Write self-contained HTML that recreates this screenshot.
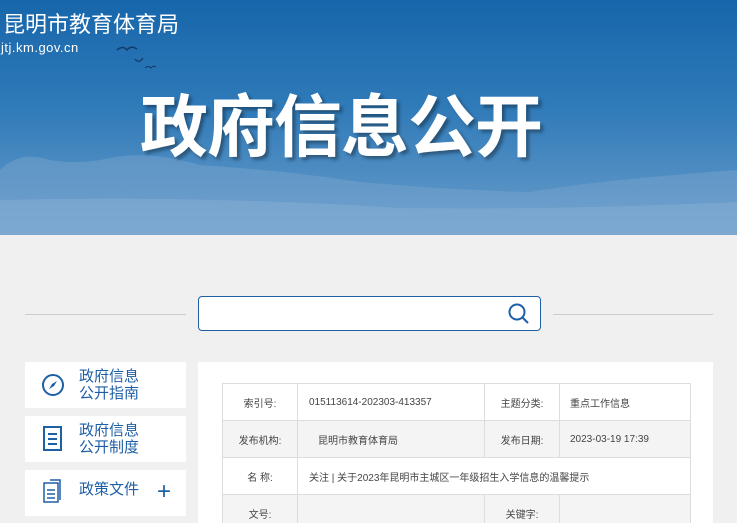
<!DOCTYPE html>
<html style="width:737px;height:523px;overflow:hidden"><head><meta charset="utf-8"><style>
*{margin:0;padding:0;box-sizing:border-box}
body{width:737px;height:523px;overflow:hidden;background:#f0f0f0;font-family:"Liberation Sans","Noto Sans CJK SC",sans-serif;position:relative}
.banner{position:absolute;left:0;top:0;width:737px;height:235px;background:linear-gradient(180deg,#1766ab 0%,#2f7ab8 45%,#6a9dcb 100%);overflow:hidden}
.abs{position:absolute}
.card{position:absolute;left:25px;width:161px;height:46px;background:#fff;color:#1e5fa5;font-size:15px;line-height:17px}
.card .t{position:absolute;left:54px;top:6px}
.wrap{position:absolute;left:0;top:0;width:737px;height:523px;overflow:hidden}
table{position:absolute;left:222px;top:383px;border-collapse:collapse;font-size:10px;color:#444}
td{border:1px solid #ddd;height:37px;padding:0;vertical-align:middle}
tr.g td{background:#f4f4f4}
.l{text-align:center}
</style></head><body><div class="wrap">
<div class="banner">
<svg class="abs" style="left:0;top:140px" width="737" height="95"><path d="M0 30 Q20 10 50 20 Q80 25 110 18 Q150 10 200 25 Q280 30 360 42 Q450 50 530 52 Q600 40 737 30 L737 95 L0 95Z" fill="#7aa6cf" opacity=".45"/><path d="M0 60 Q200 55 400 68 Q560 70 737 62 L737 95 L0 95Z" fill="#8fb3d6" opacity=".4"/></svg>
<div class="abs" style="left:3px;top:12px;color:#fff;font-size:22px;line-height:26px">昆明市教育体育局</div>
<div class="abs" style="left:1px;top:40px;color:#fff;font-size:13px;letter-spacing:.5px">jtj.km.gov.cn</div>
<svg class="abs" style="left:115px;top:44px" width="50" height="40"><path d="M2 6 Q8 1 12 6 Q16 1 22 5" stroke="#123a6a" stroke-width="1.5" fill="none"/><path d="M20 15 Q24 20 28 14" stroke="#123a6a" stroke-width="1.3" fill="none"/><path d="M30 24 Q33 21 36 24 Q39 21 41 23" stroke="#123a6a" stroke-width="1" fill="none"/></svg>
<div class="abs" style="left:140px;top:88px;color:#fff;font-size:68px;font-weight:bold;line-height:80px;letter-spacing:-1px;text-shadow:3px 3px 3px rgba(0,0,0,.35)">政府信息公开</div>
</div>
<div class="abs" style="left:25px;top:314px;width:161px;height:1px;background:#ccc"></div>
<div class="abs" style="left:553px;top:314px;width:160px;height:1px;background:#ccc"></div>
<div class="abs" style="left:198px;top:296px;width:343px;height:35px;border:1px solid #1e5fa5;border-radius:4px;background:#fff"></div>
<svg class="abs" style="left:507px;top:302px" width="24" height="24"><circle cx="10" cy="10" r="7.5" stroke="#1e5fa5" stroke-width="2" fill="none"/><path d="M15.5 15.5 L21 21" stroke="#1e5fa5" stroke-width="2"/></svg>
<div class="card" style="top:362px"><svg class="abs" style="left:16px;top:11px" width="24" height="24"><circle cx="12" cy="12" r="10" stroke="#1e5fa5" stroke-width="2" fill="none"/><path d="M16 8 L13 13 L8 16 L11 11Z" fill="#1e5fa5"/></svg><div class="t">政府信息<br>公开指南</div></div>
<div class="card" style="top:416px"><svg class="abs" style="left:17px;top:9px" width="22" height="28"><rect x="2" y="2" width="17" height="23" stroke="#1e5fa5" stroke-width="2" fill="none"/><path d="M6 9H15M6 14H15M6 19H15" stroke="#1e5fa5" stroke-width="2"/></svg><div class="t">政府信息<br>公开制度</div></div>
<div class="card" style="top:470px"><svg class="abs" style="left:17px;top:8px" width="24" height="26"><path d="M8 2H18V22" stroke="#1e5fa5" stroke-width="1.5" fill="none"/><rect x="2" y="5" width="14" height="19" stroke="#1e5fa5" stroke-width="1.5" fill="#fff"/><path d="M5 12H13M5 16H13M5 20H13" stroke="#1e5fa5" stroke-width="1.5"/></svg><div class="t" style="top:11px">政策文件</div><div class="abs" style="left:132px;top:10px;font-size:24px;line-height:24px">+</div></div>
<div class="abs" style="left:198px;top:362px;width:515px;height:161px;background:#fff"></div>
<table>
<tr><td class="l" style="width:75px">索引号:</td><td style="width:187px;padding-left:11px">015113614-202303-413357</td><td class="l" style="width:75px">主题分类:</td><td style="width:131px;padding-left:10px">重点工作信息</td></tr>
<tr class="g"><td class="l">发布机构:</td><td style="padding-left:20px">昆明市教育体育局</td><td class="l">发布日期:</td><td style="padding-left:10px">2023-03-19 17:39</td></tr>
<tr><td class="l">名 称:</td><td colspan="3" style="padding-left:11px">关注 | 关于2023年昆明市主城区一年级招生入学信息的温馨提示</td></tr>
<tr class="g"><td class="l">文号:</td><td></td><td class="l">关键字:</td><td></td></tr>
</table>
</div></body></html>
